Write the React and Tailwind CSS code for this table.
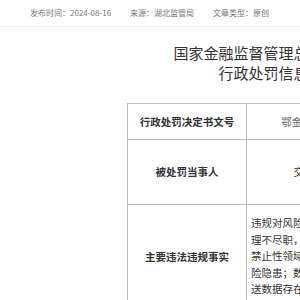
export default function App() {
  const font = { fontFamily: '"Noto Sans CJK SC", "Liberation Sans", sans-serif' };

  return (
    <div
      className="w-[300px] h-[300px] overflow-hidden bg-white"
      style={font}
    >
      <div className="w-[600px]">
        <div className="h-[27px] border-b border-[#eeeeee] flex items-center pl-[30px] gap-[19px] text-[8px] text-[#777] whitespace-nowrap">
          <span>发布时间：2024-08-16</span>
          <span>来源：湖北监管局</span>
          <span>文章类型：原创</span>
        </div>

        <div className="w-[572px] mt-[16px] text-center text-[15px] leading-[20px] text-[#333]">
          <div>国家金融监督管理总局湖北监管局</div>
          <div>行政处罚信息公开表</div>
        </div>

        <table className="ml-[127px] mt-[20px] border-collapse text-[10.5px] text-[#333]">
          <tbody>
            <tr className="h-[36px]">
              <td className="w-[119px] border border-[#bbb] text-center font-bold">
                行政处罚决定书文号
              </td>
              <td className="w-[199px] border border-[#bbb] text-center text-[#666] whitespace-nowrap">
                鄂金监罚决字〔2024〕31号
              </td>
            </tr>
            <tr className="h-[65px]">
              <td className="border border-[#bbb] text-center font-bold">
                被处罚当事人
              </td>
              <td className="border border-[#bbb] text-center whitespace-nowrap">
                交通银行股份有限公司
              </td>
            </tr>
            <tr>
              <td className="border border-[#bbb] text-center font-bold">
                主要违法违规事实
              </td>
              <td className="border border-[#bbb] px-[4px] py-[10px] leading-[16.6px]">
                <div className="w-[180px]">
                  违规对风险隐患排查与整改相关工作管理不尽职，部分贷款资金被挪用后流入禁止性领域，贷后管理中存在较大的风险隐患；数据报送管理工作不到位，报送数据存在差错。
                </div>
              </td>
            </tr>
          </tbody>
        </table>
      </div>
    </div>
  );
}
